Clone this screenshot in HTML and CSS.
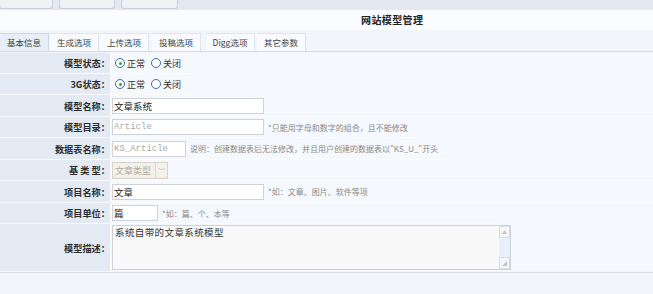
FILE: index.html
```html
<!DOCTYPE html>
<html lang="zh-CN">
<head>
  <meta charset="UTF-8" />
  <title>网站模型管理</title>
  <link rel="stylesheet" href="styles.css">
</head>
<body>
  <div class="topbar">
    <span class="tbtn b1"></span>
    <span class="tbtn b2"></span>
    <span class="tbtn b3"></span>
  </div>

  <div class="titlebar">网站模型管理</div>

  <div class="tabs">
    <span class="tab active">基本信息</span>
    <span class="tab">生成选项</span>
    <span class="tab">上传选项</span>
    <span class="tab t4">投稿选项</span>
    <span class="tab t5">Digg选项</span>
    <span class="tab t6">其它参数</span>
  </div>

  <div class="form">
    <div class="label">模型状态：</div>
    <div class="value">
      <span class="radio on"></span><span class="opt">正常</span>
      <span class="radio"></span><span class="opt">关闭</span>
    </div>

    <div class="label">3G状态：</div>
    <div class="value">
      <span class="radio on"></span><span class="opt">正常</span>
      <span class="radio"></span><span class="opt">关闭</span>
    </div>

    <div class="label">模型名称：</div>
    <div class="value"><span class="input wide">文章系统</span></div>

    <div class="label">模型目录：</div>
    <div class="value"><span class="input wide mono">Article</span><span class="tip">*只能用字母和数字的组合，且不能修改</span></div>

    <div class="label">数据表名称：</div>
    <div class="value"><span class="input mid mono">KS_Article</span><span class="tip">说明：创建数据表后无法修改，并且用户创建的数据表以"KS_U_"开头</span></div>

    <div class="label">基 类 型：</div>
    <div class="value">
      <span class="select"><span class="sel-text">文章类型</span><span class="sel-arrow">﹀</span></span>
    </div>

    <div class="label">项目名称：</div>
    <div class="value"><span class="input wide">文章</span><span class="tip">*如：文章、图片、软件等项</span></div>

    <div class="label">项目单位：</div>
    <div class="value"><span class="input small">篇</span><span class="tip">*如：篇、个、本等</span></div>

    <div class="label">模型描述：</div>
    <div class="value">
      <div class="textarea">
        <div class="ta-text">系统自带的文章系统模型</div>
        <div class="scroll">
          <span class="sb-btn">▲</span>
          <span class="sb-track"></span>
          <span class="sb-btn">◢</span>
        </div>
      </div>
    </div>
  </div>

  <div class="footer"></div>
</body>
</html>
```

FILE: styles.css
```css
body {
  margin: 0;
  font-family: "Noto Sans CJK SC", "DejaVu Sans", sans-serif;
  font-size: 9px;
  color: #333;
  background: #f2f5fa;
}
.topbar {
  height: 10px;
  background: #e4e9f1;
  display: flex;
  align-items: flex-start;
}
.tbtn {
  height: 8px;
  background: #eef2f7;
  border: 1px solid #c9d0da;
  border-top: none;
  border-radius: 0 0 3px 3px;
  margin-right: 6px;
}
.b1 { width: 52px; margin-left: -1px; }
.b2 { width: 54px; }
.b3 { width: 55px; }
.titlebar {
  height: 20px;
  line-height: 19px;
  background: #fafcff;
  padding-left: 361px;
  font-weight: bold;
  font-size: 10px;
  color: #222;
  letter-spacing: 0.4px;
}
.tabs {
  height: 18px;
  padding-top: 3px;
  display: flex;
  background: #f2f5fa;
  border-bottom: 1px solid #d6dbe2;
}
.tab {
  width: 48px;
  height: 17px;
  line-height: 17px;
  text-align: center;
  background: #f8fafd;
  border: 1px solid #e0e5ec;
  border-bottom: none;
  border-left: none;
  margin-right: 1px;
  color: #444;
  font-size: 8.5px;
}
.tab.active {
  background: #e6eef8;
  border-color: #cdd8e6;
}
.t4 { margin-left: 2px; }
.t5 { margin-left: 4px; }
.t6 { margin-left: 1px; }
.form {
  margin-top: 1px;
  display: grid;
  grid-template-columns: 110px 1fr;
  grid-template-rows: 20px 20px 21px 20px 21px 20px 21px 20px 47px;
  gap: 1px;
  background: #fbfcfe;
}
.label {
  background: #e3eaf3;
  display: flex;
  align-items: center;
  justify-content: flex-end;
  padding-right: 0;
  font-weight: bold;
  font-size: 9.2px;
  color: #2e2e2e;
}
.value {
  background: #f5f8fd;
  display: flex;
  align-items: center;
  padding-left: 1px;
}
.radio {
  width: 8px;
  height: 8px;
  border: 1px solid #3d6aa8;
  border-radius: 50%;
  background: #fff;
  margin-left: 3px;
  position: relative;
}
.radio.on::after {
  content: "";
  position: absolute;
  left: 2.5px;
  top: 2.5px;
  width: 3px;
  height: 3px;
  border-radius: 50%;
  background: #1db31d;
}
.opt {
  margin-left: 2px;
  margin-right: 3px;
}
.input {
  height: 14px;
  line-height: 14px;
  background: #fff;
  border: 1px solid #cfd3d8;
  padding-left: 1px;
  font-size: 9.5px;
  color: #222;
}
.wide { width: 149px; }
.mid { width: 71px; }
.small { width: 43px; }
.mono {
  font-family: "Liberation Mono", monospace;
  font-size: 9px;
  color: #aaa;
}
.tip {
  margin-left: 4px;
  color: #8a8a8a;
  font-size: 8px;
}
.select {
  display: flex;
  width: 54px;
  height: 15px;
  border: 1px solid #d6d3c8;
  background: #f3f1ea;
}
.sel-text {
  flex: 1;
  line-height: 15px;
  padding-left: 2px;
  color: #b0ada2;
}
.sel-arrow {
  width: 11px;
  border-left: 1px solid #dedbd2;
  color: #b8b8b8;
  font-size: 6px;
  line-height: 15px;
  text-align: center;
}
.textarea {
  width: 397px;
  height: 43px;
  border: 1px solid #cfd1d4;
  background: #f9f9f9;
  display: flex;
  align-self: flex-start;
  margin-top: 1px;
}
.ta-text {
  flex: 1;
  padding: 1px 2px;
  font-size: 9.5px;
  letter-spacing: 0.4px;
  line-height: 11px;
  color: #333;
}
.scroll {
  width: 11px;
  display: flex;
  flex-direction: column;
  background: #e8f0fb;
}
.sb-btn {
  height: 10px;
  border: 1px solid #d8dde3;
  background: #f4f6f9;
  color: #c2c6cc;
  font-size: 5px;
  line-height: 10px;
  text-align: center;
}
.sb-track {
  flex: 1;
}
.footer {
  margin-top: 1px;
  border-top: 1px solid #d8dce2;
  height: 22px;
  background: #f2f5fa;
}
```
